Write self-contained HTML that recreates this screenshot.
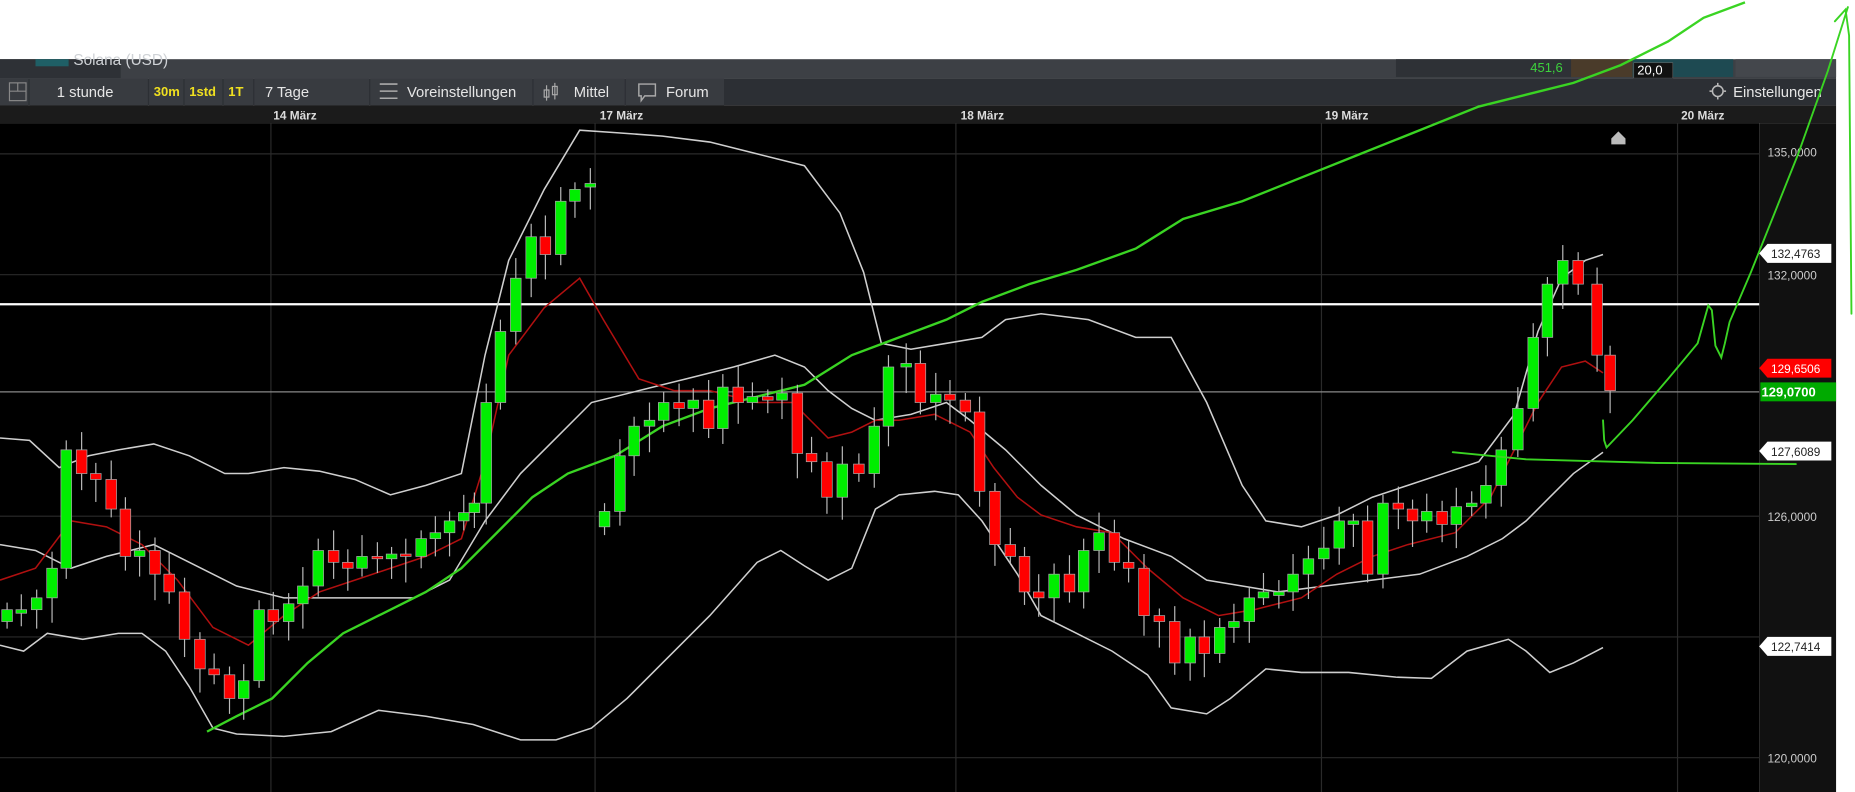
<!DOCTYPE html>
<html><head><meta charset="utf-8"><style>
html,body{margin:0;padding:0;background:#fff;overflow:hidden}
svg{display:block}
text{font-family:"Liberation Sans",sans-serif}
</style></head><body>
<svg id="s" width="1855" height="792" viewBox="0 0 1568 669" preserveAspectRatio="none" xmlns="http://www.w3.org/2000/svg">
<rect x="0" y="0" width="1568" height="669" fill="#fff"/>
<!-- tab bar -->
<rect x="0" y="50" width="1552" height="16" fill="#3d4045"/>
<rect x="0" y="50" width="102" height="16" fill="#2e3136"/>
<rect x="30" y="50" width="28" height="6" fill="#1f5f66"/>
<text x="62" y="55" font-size="13" fill="#cfd2d6">Solana (USD)</text>
<rect x="1180" y="50" width="148" height="15" fill="#2e3136"/>
<text x="1321" y="61" font-size="11" fill="#3dd23d" text-anchor="end">451,6</text>
<rect x="1328" y="50" width="52" height="15" fill="#4a3b2a"/>
<rect x="1380" y="50" width="85" height="15" fill="#1e4a52"/>
<rect x="1381" y="53" width="33" height="13" fill="#111" stroke="#666" stroke-width="0.5"/>
<text x="1384" y="63" font-size="11" fill="#fff">20,0</text>
<rect x="1467" y="50" width="85" height="15" fill="#44474c"/>
<!-- toolbar -->
<rect x="0" y="66" width="1552" height="23" fill="#2c2f34"/>
<g fill="#383b40">
<rect x="0" y="66" width="24" height="23"/>
<rect x="25" y="66" width="100" height="23"/>
<rect x="126" y="66" width="29" height="23"/>
<rect x="156" y="66" width="32" height="23"/>
<rect x="189" y="66" width="25" height="23"/>
<rect x="215" y="66" width="97" height="23"/>
<rect x="313" y="66" width="137" height="23"/>
<rect x="451" y="66" width="77" height="23"/>
<rect x="529" y="66" width="83" height="23"/>
</g>
<rect x="8" y="70" width="14" height="15" fill="none" stroke="#888" stroke-width="1"/>
<line x1="8" y1="77" x2="22" y2="77" stroke="#888"/>
<line x1="15" y1="70" x2="15" y2="77" stroke="#888"/>
<text x="48" y="82" font-size="12.5" fill="#e6e6e6">1 stunde</text>
<text x="130" y="81" font-size="11" fill="#f0e020" font-weight="bold">30m</text>
<text x="160" y="81" font-size="11" fill="#f0e020" font-weight="bold">1std</text>
<text x="193" y="81" font-size="11" fill="#f0e020" font-weight="bold">1T</text>
<text x="224" y="82" font-size="12.5" fill="#e6e6e6">7 Tage</text>
<g stroke="#aaa" stroke-width="1.3"><line x1="321" y1="71" x2="336" y2="71"/><line x1="321" y1="77" x2="336" y2="77"/><line x1="321" y1="83" x2="336" y2="83"/></g>
<text x="344" y="82" font-size="12.5" fill="#e6e6e6">Voreinstellungen</text>
<g stroke="#aaa" stroke-width="1"><line x1="462" y1="72" x2="462" y2="85"/><rect x="460" y="76" width="4" height="6" fill="none"/><line x1="469" y1="70" x2="469" y2="84"/><rect x="467" y="73" width="4" height="7" fill="none"/></g>
<text x="485" y="82" font-size="12.5" fill="#e6e6e6">Mittel</text>
<path d="M540 71h14v10h-9l-3 4v-4h-2z" fill="none" stroke="#aaa" stroke-width="1.2"/>
<text x="563" y="82" font-size="12.5" fill="#e6e6e6">Forum</text>
<circle cx="1452" cy="77" r="4.5" fill="none" stroke="#bbb" stroke-width="1.3"/>
<g stroke="#bbb" stroke-width="1.3"><line x1="1452" y1="70" x2="1452" y2="72"/><line x1="1452" y1="82" x2="1452" y2="84"/><line x1="1445" y1="77" x2="1447" y2="77"/><line x1="1457" y1="77" x2="1459" y2="77"/></g>
<text x="1465" y="82" font-size="12.5" fill="#e6e6e6">Einstellungen</text>
<!-- date axis -->
<rect x="0" y="89" width="1552" height="15" fill="#1b1b1b"/>
<g font-size="10" fill="#ddd" font-weight="bold">
<text x="231" y="101">14 März</text><text x="507" y="101">17 März</text><text x="812" y="101">18 März</text><text x="1120" y="101">19 März</text><text x="1421" y="101">20 März</text>
</g>
<!-- chart -->
<rect x="0" y="104" width="1487" height="565" fill="#000"/>
<rect x="1487" y="104" width="65" height="565" fill="#111"/>
<g stroke="#2a2a2a" stroke-width="1">
<line x1="229" y1="104" x2="229" y2="669"/><line x1="503" y1="104" x2="503" y2="669"/><line x1="808" y1="104" x2="808" y2="669"/><line x1="1117" y1="104" x2="1117" y2="669"/><line x1="1418" y1="104" x2="1418" y2="669"/>
<line x1="0" y1="130" x2="1487" y2="130"/><line x1="0" y1="232" x2="1487" y2="232"/><line x1="0" y1="436" x2="1487" y2="436"/><line x1="0" y1="538" x2="1487" y2="538"/><line x1="0" y1="640" x2="1487" y2="640"/>
</g>
<g font-size="10" fill="#ccc">
<text x="1494" y="132">135,0000</text><text x="1494" y="236">132,0000</text><text x="1494" y="440">126,0000</text><text x="1494" y="644">120,0000</text>
</g>
<line x1="0" y1="257" x2="1487" y2="257" stroke="#fff" stroke-width="2"/>
<line x1="0" y1="331" x2="1487" y2="331" stroke="#888" stroke-width="1"/>
<g id="ind" fill="none" stroke-width="1.3"></g>
<g id="cd"></g>
<path d="M1362 117l6-6 6 6v5h-12z" fill="#bbb"/>
<!-- price labels -->
<g font-size="10">
<path d="M1487 214l7-8h54v16h-54z" fill="#fff"/><text x="1497" y="218" fill="#222">132,4763</text>
<path d="M1487 311l7-8h54v16h-54z" fill="#f00"/><text x="1497" y="315" fill="#fff">129,6506</text>
<rect x="1488" y="323" width="64" height="16" fill="#0a0"/><text x="1489" y="335" fill="#fff" font-weight="bold" font-size="11">129,0700</text>
<path d="M1487 381l7-8h54v16h-54z" fill="#fff"/><text x="1497" y="385" fill="#222">127,6089</text>
<path d="M1487 546l7-8h54v16h-54z" fill="#fff"/><text x="1497" y="550" fill="#222">122,7414</text>
</g>
<!-- hand drawn -->
<g fill="none" stroke="#3ad423" stroke-width="1.6" stroke-linecap="round">
<polyline points="1228,382 1290,388 1400,391 1518,392"/>
<polyline points="1355,355 1356,372 1358,378 1380,355 1410,320 1435,290 1444,258 1447,262 1450,292 1455,302 1458,290 1462,272 1480,230 1500,180 1520,130 1545,60 1562,6"/>
<polyline points="1551,18 1560,8 1563,30 1565,265"/>
</g>
</svg>
<script>
var NS="http://www.w3.org/2000/svg";
function pl(pts,col,w){var p=document.createElementNS(NS,"polyline");p.setAttribute("points",pts.map(function(a){return a.join(",")}).join(" "));p.setAttribute("stroke",col);p.setAttribute("stroke-width",w);p.setAttribute("fill","none");document.getElementById("ind").appendChild(p);}
pl([[0,370],[25,372],[50,395],[75,385],[100,380],[130,375],[160,385],[190,400],[210,400],[240,395],[270,398],[300,405],[330,418],[360,410],[390,400],[410,300],[430,220],[460,160],[490,110],[520,112],[560,115],[600,120],[640,130],[680,140],[710,180],[730,230],[745,290],[770,295],[800,290],[830,285],[850,270],[880,265],[920,270],[960,285],[990,285],[1020,340],[1050,410],[1070,440],[1100,445],[1130,435],[1160,420],[1190,410],[1220,400],[1250,390],[1280,350],[1300,280],[1320,235],[1340,220],[1355,215]],"#cfcfcf",1.3);
pl([[0,460],[30,465],[60,480],[90,470],[130,460],[160,475],[200,495],[240,505],[270,505],[310,505],[350,505],[380,490],[410,440],[440,400],[470,370],[500,340],[540,330],[580,320],[620,310],[655,300],[680,310],[700,330],[720,345],[740,355],[770,350],[800,340],[820,355],[850,380],[880,410],[910,435],[950,455],[990,470],[1020,490],[1050,495],[1080,500],[1120,495],[1160,490],[1200,485],[1240,470],[1270,455],[1290,440],[1310,420],[1330,400],[1355,382]],"#cfcfcf",1.3);
pl([[0,545],[20,550],[40,535],[70,540],[100,535],[120,535],[140,550],[160,580],[180,615],[200,620],[240,622],[280,618],[320,600],[360,605],[400,612],[440,625],[470,625],[500,615],[530,590],[560,560],[600,520],[640,475],[660,465],[680,478],[700,490],[720,480],[740,430],[760,418],[790,415],[810,418],[830,440],[860,485],[880,520],[910,535],[940,550],[970,570],[990,598],[1020,603],[1040,590],[1070,565],[1100,568],[1140,568],[1180,572],[1210,573],[1240,550],[1275,540],[1290,550],[1310,568],[1330,560],[1355,547]],"#cfcfcf",1.3);
pl([[0,490],[30,480],[60,440],[90,445],[120,460],[150,490],[180,530],[210,545],[240,520],[270,500],[300,490],[330,480],[360,470],[390,455],[410,390],[430,300],[460,260],[490,235],[510,270],[540,320],[570,330],[600,330],[640,340],[670,340],[700,370],[720,365],[740,355],[760,355],[790,350],[820,365],[840,395],[860,420],[880,435],[910,445],[940,450],[970,480],[1000,505],[1030,520],[1060,515],[1100,505],[1130,485],[1160,470],[1190,460],[1230,450],[1260,420],[1280,380],[1300,340],[1320,310],[1340,305],[1355,315]],"#b01010",1.3);
pl([[175,618],[200,605],[230,590],[260,560],[290,535],[320,520],[360,500],[390,480],[420,450],[450,420],[480,400],[520,385],[560,360],[600,345],[640,335],[680,325],[720,300],[760,285],[800,270],[830,255],[870,240],[910,228],[960,210],[1000,185],[1050,170],[1100,150],[1150,130],[1200,110],[1250,90],[1290,80],[1330,70],[1370,55],[1410,35],[1440,15],[1475,2]],"#3ad423",2);
var c=[[0,515],[12,515],[25,505],[38,480],[50,380],[63,400],[75,405],[88,430],[100,470],[112,465],[125,485],[137,500],[150,540],[163,565],[175,570],[188,590],[200,575],[213,515],[225,525],[238,510],[250,495],[263,465],[276,475],[288,480],[300,470],[313,472],[325,468],[337,470],[350,455],[362,450],[374,440],[386,433],[395,425],[405,340],[417,280],[430,235],[443,200],[455,215],[468,170],[480,160],[493,155,154],[505,432,445],[518,385],[530,360],[543,355],[555,340],[568,345],[580,338],[593,362],[605,327],[618,340],[630,335],[643,338],[655,332],[668,383],[680,390],[693,420],[706,392],[720,400],[733,360],[745,310],[760,307],[772,340],[785,333],[797,338],[810,348],[822,415],[835,460],[848,470],[860,500],[872,505],[885,485],[898,500],[910,465],[923,450],[936,475],[948,480],[961,520],[974,525],[987,560],[1000,538],[1012,552],[1025,530],[1037,525],[1050,505],[1062,500],[1075,500],[1087,485],[1100,472],[1113,463],[1126,440],[1138,440],[1150,485],[1163,425],[1176,430],[1188,440],[1200,432],[1213,443],[1225,428],[1238,425],[1250,410],[1263,380],[1277,345],[1290,285],[1302,240],[1315,220],[1328,240],[1344,300],[1355,330]];
var g=document.getElementById("cd"),h="";
for(var i=0;i<c.length;i++){var x=c[i][0]+6,cl=c[i][1],op=c[i].length>2?c[i][2]:(i?c[i-1][1]:cl+10);if(Math.abs(op-cl)<2)op=cl+3;
var up=cl<op,t=Math.min(op,cl),b=Math.max(op,cl),col=up?"#00ee00":"#ff0000";
var wt=t-6-((i*7)%13),wb=b+6+((i*5)%17);
h+='<line x1="'+x+'" y1="'+wt+'" x2="'+x+'" y2="'+wb+'" stroke="#bbb" stroke-width="1"/>';
h+='<rect x="'+(x-4.5)+'" y="'+t+'" width="9" height="'+(b-t)+'" fill="'+col+'" stroke="#aaa" stroke-width="0.6"/>';}
g.innerHTML=h;
</script>
</body></html>
